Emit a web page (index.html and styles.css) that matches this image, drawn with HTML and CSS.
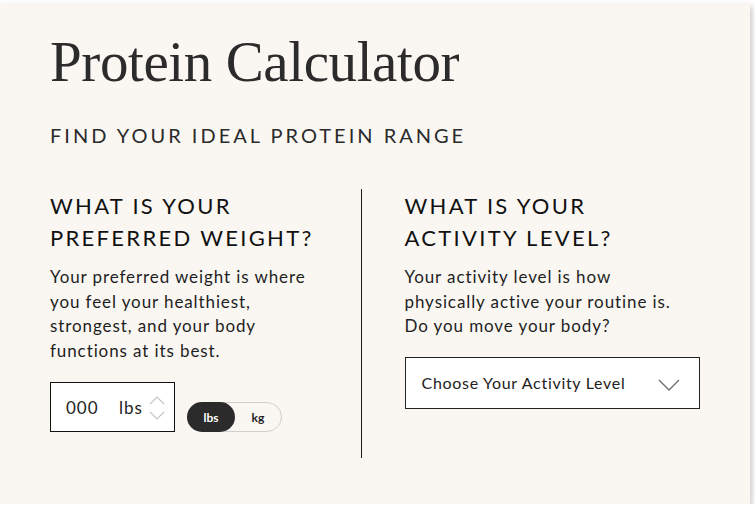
FILE: index.html
```html
<!DOCTYPE html>
<html lang="en">
<head>
    <meta charset="UTF-8">
    <meta name="viewport" content="width=device-width, initial-scale=1.0">
    <title>Protein Calculator</title>
    <link rel="stylesheet" href="styles.css">
</head>
<body>
    <div class="calculator">
        <h1 class="title">Protein Calculator</h1>
        <h2 class="subtitle">FIND YOUR IDEAL PROTEIN RANGE</h2>

        <div class="columns">
            <div class="column left_col">
                <h3>WHAT IS YOUR<br>PREFERRED WEIGHT?</h3>
                <p>Your preferred weight is where you feel your healthiest, strongest, and your body functions at its best.</p>
                <div class="weight_row">
                    <div class="weight_input">
                        <span class="value">000</span>
                        <span class="unit">lbs</span>
                        <span class="spinner">
                            <svg width="16" height="26" viewBox="0 0 16 26">
                                <polyline points="1,9 8,2 15,9" fill="none" stroke="#c4c4c4" stroke-width="1.2"/>
                                <polyline points="1,17 8,24 15,17" fill="none" stroke="#c4c4c4" stroke-width="1.2"/>
                            </svg>
                        </span>
                    </div>
                    <div class="unit_toggle">
                        <button class="toggle_btn active">lbs</button>
                        <button class="toggle_btn">kg</button>
                    </div>
                </div>
            </div>

            <div class="divider"></div>

            <div class="column right_col">
                <h3>WHAT IS YOUR<br>ACTIVITY LEVEL?</h3>
                <p>Your activity level is how physically active your routine is. Do you move your body?</p>
                <div class="activity_select">
                    <span>Choose Your Activity Level</span>
                    <svg width="22" height="12" viewBox="0 0 22 12">
                        <polyline points="1,1 11,11 21,1" fill="none" stroke="#6b6b6b" stroke-width="1.3"/>
                    </svg>
                </div>
            </div>
        </div>
    </div>
</body>
</html>
```

FILE: styles.css
```css
body {
    margin: 0;
    padding-top: 3px;
    background: #ffffff;
    font-family: Lato, "Open Sans", sans-serif;
    color: #1e1e1e;
}

.calculator {
    width: 750px;
    height: 501px;
    box-sizing: border-box;
    padding: 25px 50px 0 50px;
    background: #faf7f3;
    box-shadow: 2px 3px 6px rgba(0, 0, 0, 0.22);
}

.title {
    margin: 0;
    font-family: "Liberation Serif", serif;
    font-weight: normal;
    font-size: 57px;
    line-height: 68px;
    color: #2b2b2b;
    letter-spacing: -0.4px;
}

.subtitle {
    margin: 27px 0 0 0;
    font-weight: normal;
    font-size: 20px;
    line-height: 24px;
    letter-spacing: 3px;
    color: #2b2b2b;
}

.columns {
    display: flex;
    margin-top: 42px;
}

.column h3 {
    margin: 0;
    font-weight: normal;
    font-size: 22px;
    line-height: 32px;
    letter-spacing: 2.3px;
    color: #111;
}

.column p {
    margin: 11px 0 0 0;
    font-size: 17px;
    line-height: 24.5px;
    letter-spacing: 0.9px;
    color: #1e1e1e;
}

.left_col {
    width: 280px;
    padding: 1px 31px 26px 0;
}

.left_col p {
    width: 272px;
}

.right_col {
    width: 296px;
    padding: 1px 0 0 43px;
}

.right_col p {
    width: 285px;
}

.divider {
    width: 1px;
    background: #1a1a1a;
}

.weight_row {
    display: flex;
    align-items: flex-end;
    margin-top: 19px;
}

.weight_input {
    display: flex;
    align-items: center;
    width: 125px;
    height: 50px;
    box-sizing: border-box;
    border: 1px solid #111;
    background: #fff;
    padding-left: 15px;
    font-size: 17px;
    letter-spacing: 1px;
}

.weight_input .value {
    width: 53px;
}

.weight_input .unit {
    width: 30px;
}

.spinner {
    display: flex;
    padding-top: 2px;
}

.unit_toggle {
    display: flex;
    margin-left: 12px;
    width: 95px;
    height: 30px;
    box-sizing: border-box;
    border: 1px solid #cfcfcf;
    border-radius: 15px;
}

.toggle_btn {
    border: none;
    background: none;
    font-family: inherit;
    font-weight: bold;
    font-size: 12px;
    color: #1e1e1e;
    width: 47px;
    padding: 0;
    cursor: pointer;
}

.toggle_btn.active {
    background: #2b2b2b;
    color: #fff;
    border-radius: 15px;
    margin: -1px 0 -1px -1px;
    width: 49px;
}

.activity_select {
    display: flex;
    align-items: center;
    justify-content: space-between;
    margin-top: 18px;
    width: 295px;
    height: 52px;
    box-sizing: border-box;
    border: 1px solid #222;
    background: #fff;
    padding: 0 19px 0 16px;
    font-size: 16px;
    letter-spacing: 0.7px;
    color: #222;
    cursor: pointer;
}

.activity_select svg {
    margin-top: 4px;
}
```
